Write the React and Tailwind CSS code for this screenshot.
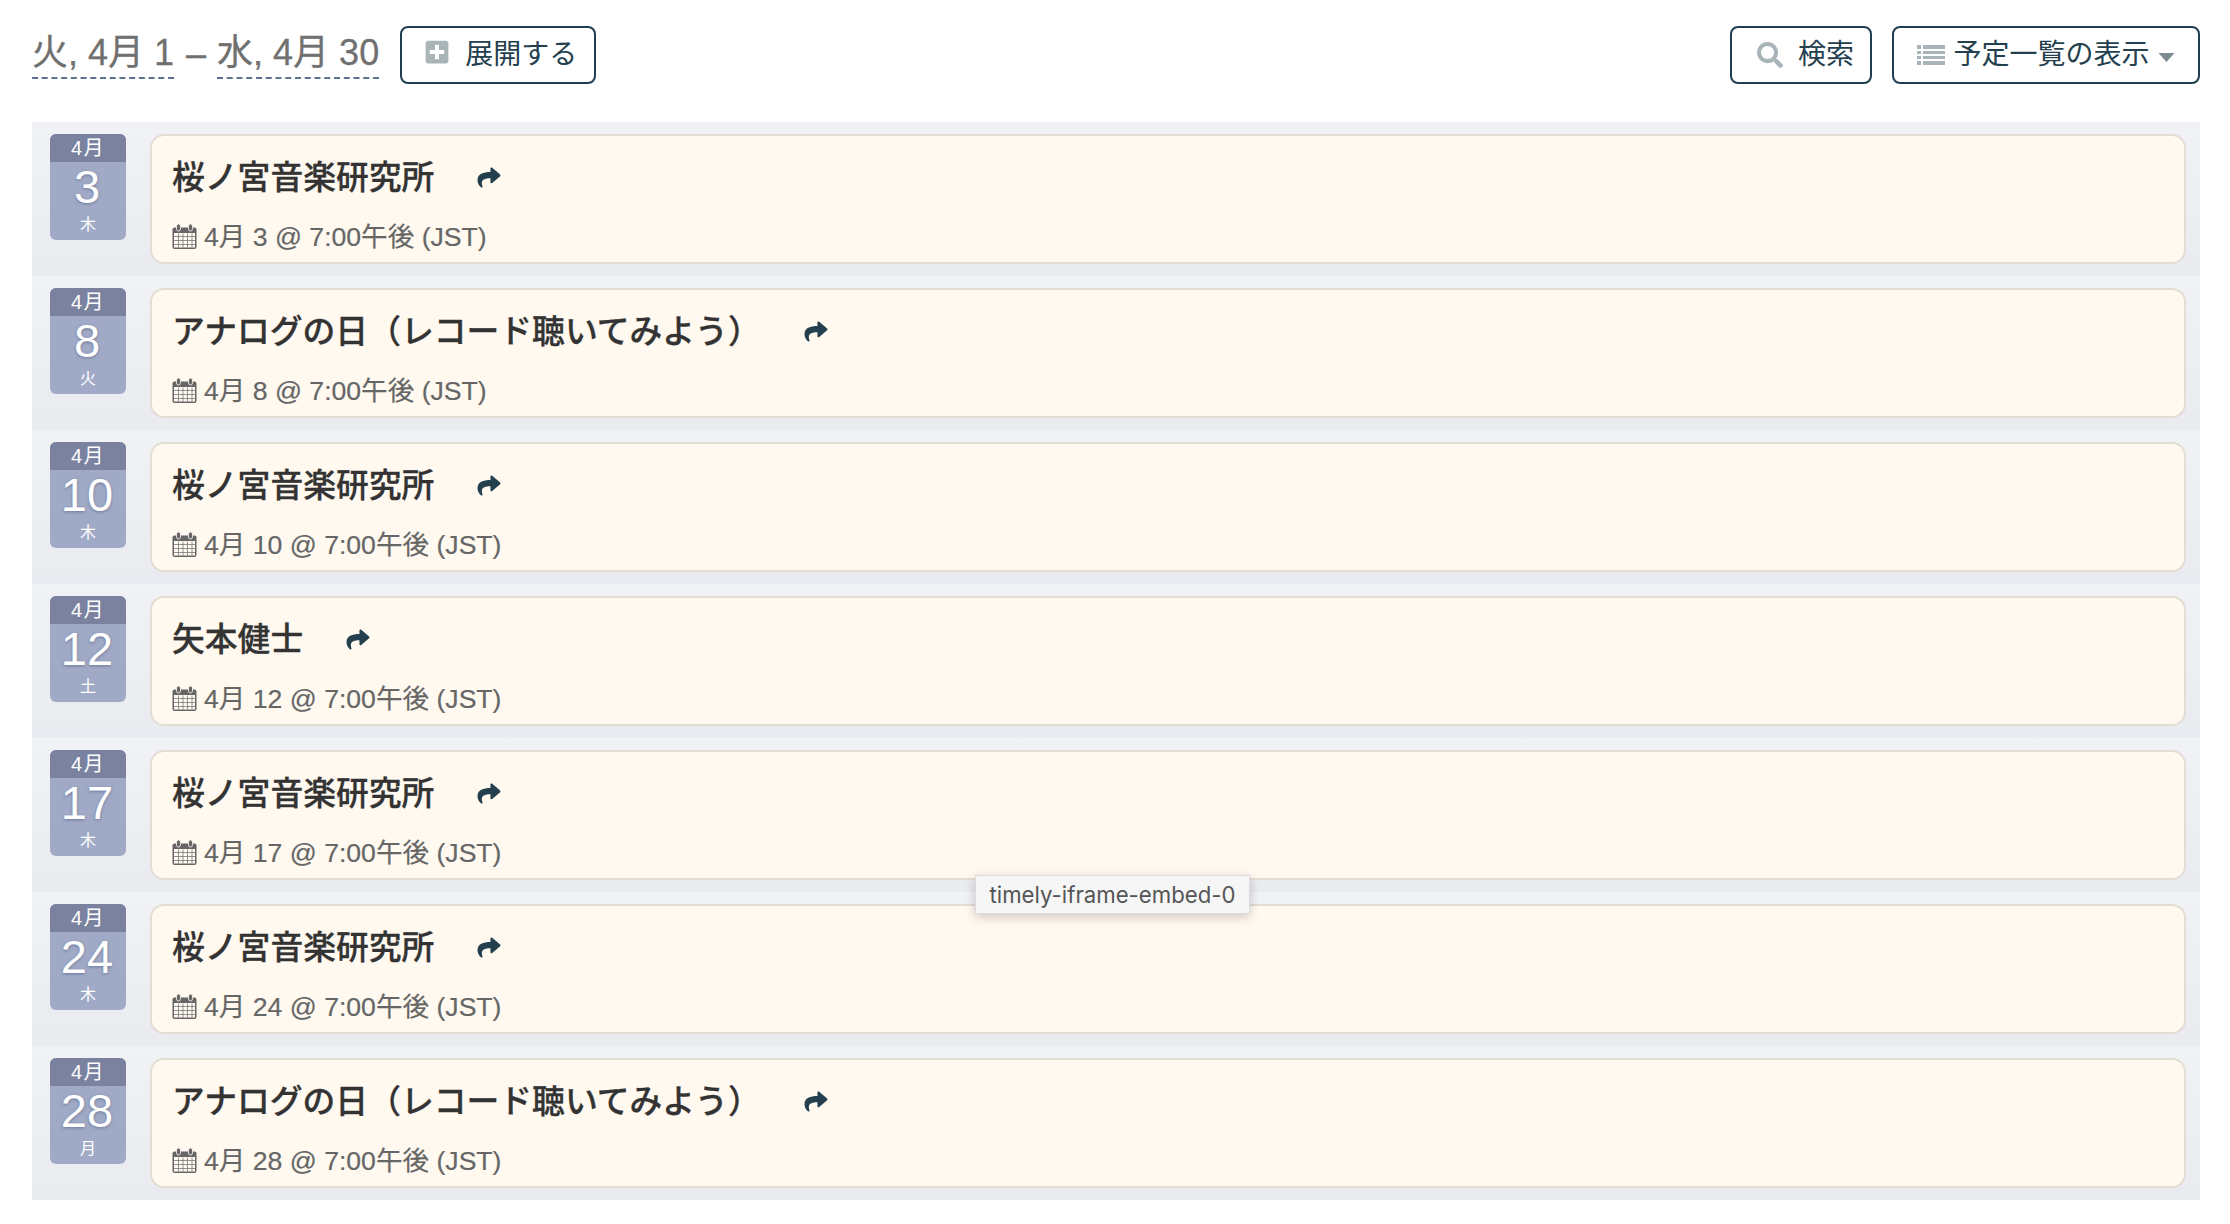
import React from "react";
import { FaSearch, FaShare, FaPlusSquare } from "react-icons/fa";

const FONT = "font-['Liberation_Sans','Noto_Sans_CJK_JP',sans-serif]";

const rows = [
  { d: 3, w: "木", t: "桜ノ宮音楽研究所" },
  { d: 8, w: "火", t: "アナログの日（レコード聴いてみよう）" },
  { d: 10, w: "木", t: "桜ノ宮音楽研究所" },
  { d: 12, w: "土", t: "矢本健士" },
  { d: 17, w: "木", t: "桜ノ宮音楽研究所" },
  { d: 24, w: "木", t: "桜ノ宮音楽研究所" },
  { d: 28, w: "月", t: "アナログの日（レコード聴いてみよう）" },
];

function CalendarIcon() {
  return (
    <svg viewBox="0 0 25 26" className="w-[25px] h-[27px] shrink-0 -mt-[2px]" fill="none">
      <rect x="0.5" y="4" width="24" height="21.5" rx="2" fill="#666" />
      <rect x="2" y="9.5" width="21" height="14.5" fill="#fff9f0" />
      <path d="M6.5 10v14M11 10v14M15.5 10v14M20 10v14M2 13h21M2 17h21M2 21h21" stroke="#777" strokeWidth="0.8" />
      <rect x="4.5" y="0.5" width="4" height="7" rx="2" fill="#666" stroke="#fff9f0" strokeWidth="0.8" />
      <rect x="16.5" y="0.5" width="4" height="7" rx="2" fill="#666" stroke="#fff9f0" strokeWidth="0.8" />
    </svg>
  );
}

function ListIcon() {
  return (
    <svg viewBox="0 0 28 24" className="w-[28px] h-[24px] shrink-0" fill="#a9b4b9">
      <rect x="0" y="2" width="4" height="4" />
      <rect x="6" y="2" width="22" height="4" />
      <rect x="0" y="8" width="4" height="3" />
      <rect x="6" y="8" width="22" height="3" />
      <rect x="0" y="13" width="4" height="3" />
      <rect x="6" y="13" width="22" height="3" />
      <rect x="0" y="18" width="4" height="4" />
      <rect x="6" y="18" width="22" height="4" />
    </svg>
  );
}

function Row({ d, w, t }) {
  return (
    <div className="flex h-[154px] items-start gap-[24px] pl-[18px] pr-[14px] pt-[12px] bg-gradient-to-b from-[#f1f2f6] to-[#e9ebf0]">
      <div className="w-[76px] h-[106px] shrink-0 rounded-[6px] overflow-hidden bg-[#a0aac6] text-white text-center flex flex-col">
        <div className="h-[28px] bg-[#7a829f] text-[20px] leading-[28px] tracking-[1.5px]">4月</div>
        <div className="h-[50px] text-[47px] leading-[50px] pr-[2px] [text-shadow:0_1px_3px_rgba(60,70,110,0.5)]">{d}</div>
        <div className="text-[16px] leading-[20px] mt-[3px]">{w}</div>
      </div>
      <div className="flex-1 h-[130px] rounded-[14px] border-2 border-[#e3ddd4] bg-[#fff9f0] pl-[20px] pt-[22px]">
        <div className="flex items-center h-[40px]">
          <span className="text-[32.8px] leading-[40px] font-medium text-[#333] [-webkit-text-stroke:0.3px]">{t}</span>
          <FaShare className="ml-[42px] -mt-[2px] w-[26px] h-[23px] text-[#24404f]" />
        </div>
        <div className="flex items-center gap-[7px] mt-[24px] text-[26.6px] leading-[30px] text-[#666] [-webkit-text-stroke:0.2px]">
          <CalendarIcon />
          <span>4月 {d} @ 7:00午後 (JST)</span>
        </div>
      </div>
    </div>
  );
}

export default function App() {
  return (
    <div className={`${FONT} relative w-[2230px] h-[1224px] bg-white px-[32px] pt-[26px]`}>
      <div className="flex items-center justify-between h-[57px] w-[2168px] mb-[39px]">
        <div className="flex items-center">
          <div className="flex items-center text-[36px] leading-[42px] text-[#707070] mr-[21px] mt-[2px] [-webkit-text-stroke:0.3px]">
            <span className="border-b-2 border-dashed border-[#5c7391] pb-[3px]">火, 4月 1</span>
            <span className="ml-[12px] mr-[11px] pb-[4px]">–</span>
            <span className="border-b-2 border-dashed border-[#5c7391] pb-[3px]">水, 4月 30</span>
          </div>
          <button className="h-[58px] w-[196px] rounded-[8px] border-[2.5px] border-[#1f3f50] flex items-center justify-center gap-[15px] pl-[5px] text-[28px] text-[#24404f]">
            <FaPlusSquare className="w-[26px] h-[26px] text-[#a9b4b9] -mt-[5px]" />
            <span>展開する</span>
          </button>
        </div>
        <div className="flex items-center gap-[20px]">
          <button className="h-[58px] w-[142px] rounded-[8px] border-[2.5px] border-[#1f3f50] flex items-center justify-center gap-[15px] pl-[9px] text-[28px] text-[#24404f]">
            <FaSearch className="w-[26px] h-[26px] text-[#a9b4b9]" />
            <span>検索</span>
          </button>
          <button className="h-[58px] w-[308px] rounded-[8px] border-[2.5px] border-[#1f3f50] flex items-center justify-center gap-[8px] text-[28px] text-[#24404f]">
            <ListIcon />
            <span>予定一覧の表示</span>
            <svg viewBox="0 0 16 9" className="w-[17px] h-[9px] mt-[6px]" fill="#7d8b93"><path d="M0 0h16L8 9z" /></svg>
          </button>
        </div>
      </div>
      <div className="w-[2168px]">
        {rows.map((r, i) => <Row key={i} {...r} />)}
      </div>
      <div className="absolute left-[975px] top-[875px] w-[275px] h-[39px] bg-[#f6f6f7] border border-[#dcdcdc] shadow-[0_3px_10px_rgba(0,0,0,0.2)] font-['Inter',sans-serif] text-[22.2px] leading-[37px] text-center text-[#555]">
        timely-iframe-embed-0
      </div>
    </div>
  );
}
